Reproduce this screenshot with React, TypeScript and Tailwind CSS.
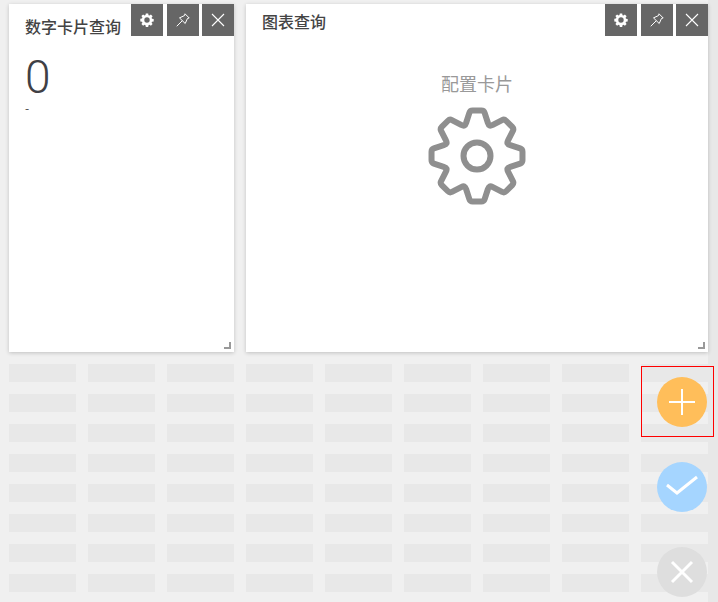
import React from "react";

// eight-tooth outline for the big settings gear, corners rounded off
const gearPath = (() => {
  const cx = 50;
  const cy = 50;
  const pts: [number, number][] = [];
  for (let i = 0; i < 8; i++) {
    const a = (i * Math.PI) / 4 - Math.PI / 2;
    const p = (r: number, off: number): [number, number] => [
      cx + r * Math.cos(a + off),
      cy + r * Math.sin(a + off),
    ];
    pts.push(p(33, -0.36), p(46, -0.15), p(46, 0.15), p(33, 0.36));
  }
  const toward = (from: [number, number], to: [number, number], d: number) => {
    const len = Math.hypot(to[0] - from[0], to[1] - from[1]);
    const t = Math.min(d / len, 0.5);
    return `${(from[0] + (to[0] - from[0]) * t).toFixed(2)} ${(from[1] + (to[1] - from[1]) * t).toFixed(2)}`;
  };
  let d = "";
  pts.forEach((pt, i) => {
    const prev = pts[(i + pts.length - 1) % pts.length];
    const next = pts[(i + 1) % pts.length];
    d += `${i === 0 ? "M" : "L"}${toward(pt, prev, 2.5)}Q${pt[0].toFixed(2)} ${pt[1].toFixed(2)} ${toward(pt, next, 2.5)}`;
  });
  return `${d}Z`;
})();

const ToolGear = () => (
  <svg width="14" height="14" viewBox="0 0 14 14">
    <path
      fill="#fff"
      fillRule="evenodd"
      d="M5.800 0.500h2.400l.3 1.700 1 .4 1.400-1 1.700 1.700-1 1.400.4 1 1.700.3v2.400l-1.700.3-.4 1 1 1.400-1.700 1.700-1.400-1-1 .4-.3 1.700H5.800l-.3-1.700-1-.4-1.400 1-1.700-1.700 1-1.400-.4-1-1.700-.3V5.800l1.700-.3.4-1-1-1.400 1.700-1.700 1.400 1 1-.4zM7 4.300a2.700 2.700 0 1 0 0 5.400 2.700 2.700 0 0 0 0-5.400z"
    />
  </svg>
);

const ToolPin = () => (
  <svg width="14" height="14" viewBox="0 0 14 14" fill="none" stroke="#fff" strokeWidth="1">
    <path d="M9 0.800 13.200 5 11.500 5.400 9.200 10.500 3.500 4.900 8.600 2.500z" strokeLinejoin="round" />
    <path d="M6 8 1 13" strokeLinecap="round" />
  </svg>
);

const ToolClose = () => (
  <svg width="14" height="14" viewBox="0 0 14 14" stroke="#fff" strokeWidth="1.100">
    <path d="M1 1 13 13M13 1 1 13" />
  </svg>
);

const CardTools = () => (
  <div className="absolute right-0 top-0 flex">
    <div className="flex h-8 w-8 items-center justify-center bg-[#666]">
      <ToolGear />
    </div>
    <div className="ml-1 flex h-8 w-8 items-center justify-center bg-[#666]">
      <ToolPin />
    </div>
    <div className="ml-[3px] flex h-8 w-8 items-center justify-center bg-[#666]">
      <ToolClose />
    </div>
  </div>
);

const ResizeHandle = () => (
  <div className="absolute bottom-[3px] right-[3px] h-[7px] w-[7px] border-b-2 border-r-2 border-[#999]" />
);

const cells = Array.from({ length: 72 }, (_, i) => i);

export default function App() {
  const font = { fontFamily: '"Noto Sans CJK SC", sans-serif' };

  return (
    <div className="relative h-[602px] w-[718px] overflow-hidden bg-[#e8e8e8]" style={font}>
      <div className="relative h-[602px] w-[708px] bg-[#f0f0f0]">
        {/* placeholder grid sits under the cards, with rows pushed below them */}
        <div className="grid grid-cols-[repeat(9,67px)] auto-rows-[18px] gap-x-3 gap-y-3 pl-[9px] pt-1">
          <div className="relative col-span-3 row-span-12 bg-white shadow-[0_1px_4px_rgba(0,0,0,0.2)]">
            <div className="pl-4 pt-[10px] text-base font-medium leading-6 text-[#444]">数字卡片查询</div>
            <div className="pl-4 pt-4 font-['Roboto'] text-[46px] font-light leading-[46px] text-[#3f4045]">0</div>
            <div className="pl-4 pt-[3px] text-xs leading-[10px] text-[#444]">-</div>
            <CardTools />
            <ResizeHandle />
          </div>

          <div className="relative col-span-6 row-span-12 bg-white shadow-[0_1px_4px_rgba(0,0,0,0.2)]">
            <div className="pl-4 pt-[5px] text-base font-medium leading-6 text-[#444]">图表查询</div>
            <div className="flex flex-col items-center pt-[38px]">
              <div className="text-lg leading-6 text-[#999]">配置卡片</div>
              <svg width="100" height="100" viewBox="0 0 100 100" className="mt-[11px]" fill="none" stroke="#8f8f8f">
                <path d={gearPath} strokeWidth="6" strokeLinejoin="round" />
                <circle cx="50" cy="50" r="13.500" strokeWidth="6" />
              </svg>
            </div>
            <CardTools />
            <ResizeHandle />
          </div>

          {cells.map((i) => (
            <div key={i} className="bg-[#e8e8e8]" />
          ))}
        </div>
      </div>

      {/* floating edit actions */}
      <div className="absolute left-[641px] top-[366px] h-[71px] w-[73px] border border-[#f00]" />
      <div className="absolute left-[657px] top-[377px] flex h-[50px] w-[50px] items-center justify-center rounded-full bg-[#ffbe5a]">
        <svg width="28" height="28" viewBox="0 0 28 28" stroke="#fff" strokeWidth="2">
          <path d="M1 14H27M14 1V27" />
        </svg>
      </div>
      <div className="absolute left-[657px] top-[462px] flex h-[50px] w-[50px] items-center justify-center rounded-full bg-[#a5d5ff]">
        <svg width="32" height="24" viewBox="0 0 32 24" fill="none" stroke="#fff" strokeWidth="3">
          <path d="M1 10 11 18 31 2" />
        </svg>
      </div>
      <div className="absolute left-[657px] top-[547px] flex h-[50px] w-[50px] items-center justify-center rounded-full bg-[#dedede]">
        <svg width="24" height="24" viewBox="0 0 24 24" stroke="#fff" strokeWidth="3">
          <path d="M2 2 22 22M22 2 2 22" />
        </svg>
      </div>
    </div>
  );
}
